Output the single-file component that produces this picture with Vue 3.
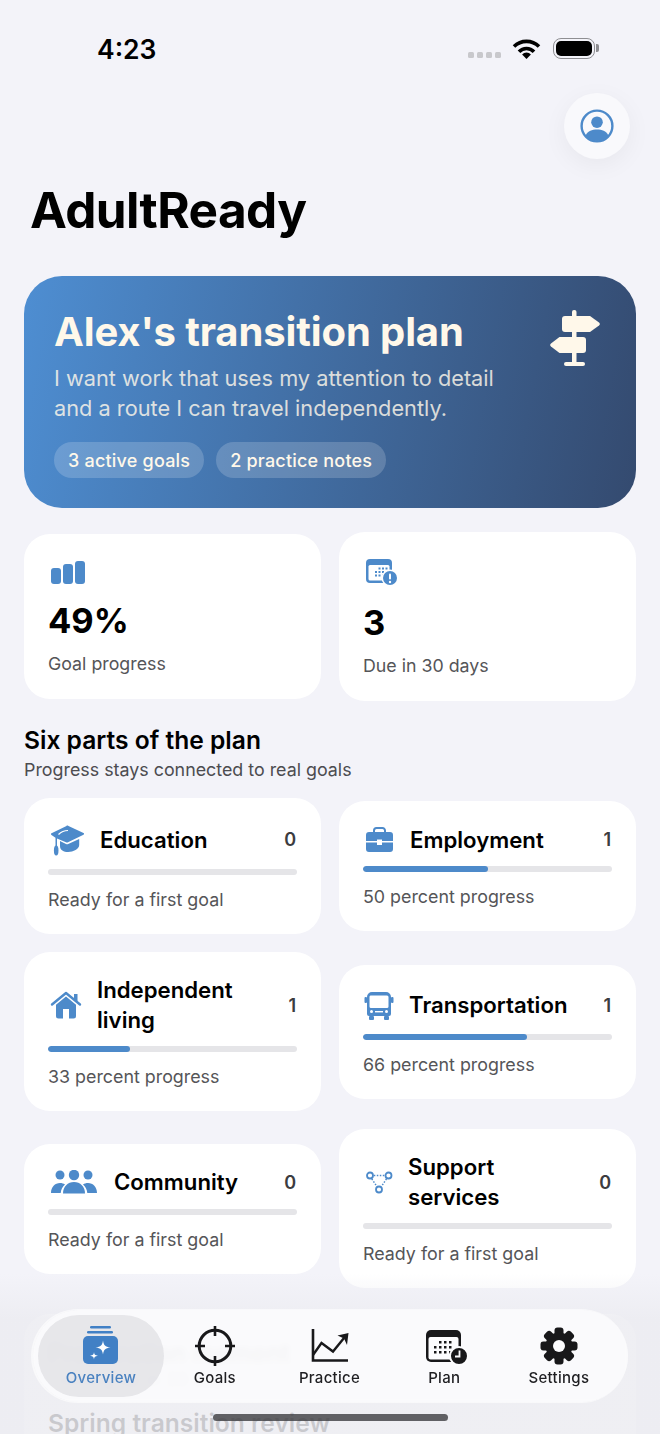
<template>
  <div class="phone">
    <div class="status-bar">
      <span class="time">4:23</span>
      <div class="status-icons">
        <div class="signal"><i></i><i></i><i></i><i></i></div>
        <svg class="wifi" width="29" height="21" viewBox="0 0 29 21">
          <path d="M2 8.5a17.8 17.8 0 0 1 25 0M7 13.8a10.2 10.2 0 0 1 15 0" fill="none" stroke="#000" stroke-width="3.6" />
          <path d="M14.5 21l-4.4-4.6a6 6 0 0 1 8.8 0z" />
        </svg>
        <div class="battery"><div class="battery-level"></div></div>
      </div>
    </div>

    <div class="top-row">
      <button class="avatar">
        <svg width="34" height="34" viewBox="0 0 34 34">
          <circle cx="17" cy="17" r="15.4" fill="none" stroke="#4d8aca" stroke-width="2.4" />
          <circle cx="17" cy="13.2" r="5.8" fill="#4d8aca" />
          <path d="M5.6 26.5C8 22 12 20.6 17 20.6s9 1.4 11.4 5.9A15 15 0 0 1 17 32 15 15 0 0 1 5.6 26.5z" fill="#4d8aca" />
        </svg>
      </button>
    </div>

    <h1 class="app-title">AdultReady</h1>

    <section class="hero">
      <div class="hero-text">
        <h2>Alex's transition plan</h2>
        <p>I want work that uses my attention to detail and a route I can travel independently.</p>
        <div class="chips">
          <span class="chip">3 active goals</span>
          <span class="chip">2 practice notes</span>
        </div>
      </div>
      <svg class="signpost" width="50" height="56" viewBox="0 0 50 56" fill="#fff8ea">
        <rect x="22" y="0" width="4.5" height="54" rx="2" />
        <rect x="14" y="52" width="21" height="4" rx="2" />
        <path d="M15 6h25l9 6.5a2 2 0 0 1 0 3L40 22H15a3 3 0 0 1-3-3V9a3 3 0 0 1 3-3z" />
        <path d="M33 27H9.500L1 33.500a2 2 0 0 0 0 3L9.500 43H33a3 3 0 0 0 3-3V30a3 3 0 0 0-3-3z" />
      </svg>
    </section>

    <div class="stats">
      <div class="stat-card">
        <div class="stat-icon small">
          <svg width="37" height="30" viewBox="0 0 37 30" fill="#4d8aca">
            <rect x="3" y="10" width="10" height="16" rx="3" />
            <rect x="15" y="6" width="10" height="20" rx="3" />
            <rect x="27" y="3" width="10" height="23" rx="3" />
          </svg>
        </div>
        <div class="stat-value">49%</div>
        <div class="stat-label">Goal progress</div>
      </div>
      <div class="stat-card">
        <div class="stat-icon">
          <svg width="37" height="34" viewBox="0 0 37 34">
            <rect x="3" y="3" width="26" height="24" rx="4" fill="#4d8aca" />
            <rect x="5.500" y="9" width="21" height="15.500" rx="1.500" fill="#fff" />
            <g fill="#4d8aca">
              <rect v-for="d in calendarDots" :key="d[0] + '-' + d[1]" :x="d[0]" :y="d[1]" width="2" height="2" />
            </g>
            <circle cx="27" cy="22" r="8.500" fill="#fff" />
            <circle cx="27" cy="22" r="7" fill="#4d8aca" />
            <rect x="26" y="17.500" width="2" height="6" rx="1" fill="#fff" />
            <circle cx="27" cy="26" r="1.200" fill="#fff" />
          </svg>
        </div>
        <div class="stat-value">3</div>
        <div class="stat-label">Due in 30 days</div>
      </div>
    </div>

    <h3 class="section-title">Six parts of the plan</h3>
    <p class="section-sub">Progress stays connected to real goals</p>

    <div class="areas">
      <div v-for="area in areas" :key="area.name" class="area-card">
        <div class="area-head" :style="{ minHeight: area.head + 'px' }">
          <svg v-if="area.icon === 'cap'" width="38" height="32" viewBox="0 0 38 32" fill="#4d8aca">
            <path d="M19 1.500c.5 0 1 .1 1.500.4l15 7a1 1 0 0 1 0 1.800l-15.500 7.500c-.6.300-1.400.3-2 0L9 14.500v7.500H7.500v-8.200L3.500 11a1 1 0 0 1 0-1.800l15-7.300c.2-.2.300-.4.500-.4z" />
            <path d="M12 17l6 3c.7.3 1.500.3 2.200 0l11-5v6c0 4-6 7-11 7-4.500 0-8.200-2-8.200-6z" />
            <path d="M20 6.500c-3.500 0-7 1.500-9.500 4" fill="none" stroke="#fff" stroke-width="1.200" />
            <ellipse cx="8.200" cy="26.500" rx="2.300" ry="5" />
          </svg>
          <svg v-else-if="area.icon === 'case'" width="33" height="25" viewBox="0 0 33 25" fill="#4d8aca">
            <path d="M11 5V3.500A2.500 2.500 0 0 1 13.500 1h6A2.500 2.500 0 0 1 22 3.500V5" fill="none" stroke="#4d8aca" stroke-width="2" />
            <path d="M6 5h21a3 3 0 0 1 3 3v6H19v-1.500h-5V14H3V8a3 3 0 0 1 3-3z" />
            <path d="M3 15.500h11V18h5v-2.500h11V22a3 3 0 0 1-3 3H6a3 3 0 0 1-3-3z" />
          </svg>
          <svg v-else-if="area.icon === 'house'" width="35" height="28" viewBox="0 0 35 28" fill="#4d8aca">
            <path d="M4 13.500L18 2l14 11.500" fill="none" stroke="#4d8aca" stroke-width="2.400" stroke-linecap="round" stroke-linejoin="round" />
            <rect x="26" y="3" width="3.500" height="7" />
            <path d="M18 5.500l10 8.300V25a2.500 2.500 0 0 1-2.500 2.500H10.500A2.500 2.500 0 0 1 8 25V13.800zM15 18v9.500h6V18z" fill-rule="evenodd" />
          </svg>
          <svg v-else-if="area.icon === 'bus'" width="32" height="29" viewBox="0 0 32 29" fill="#4d8aca">
            <path d="M9 1h14a5 5 0 0 1 5 5v17a2 2 0 0 1-2 2H6a2 2 0 0 1-2-2V6a5 5 0 0 1 5-5zm-1.500 3.500a1.500 1.500 0 0 0-1 1.500v9.500a1.500 1.500 0 0 0 1.500 1.500h16a1.500 1.500 0 0 0 1.500-1.500V6a1.500 1.500 0 0 0-1.500-1.500z" fill-rule="evenodd" />
            <rect x="6" y="25" width="5" height="4" rx="1" />
            <rect x="21" y="25" width="5" height="4" rx="1" />
            <rect x="1.500" y="6" width="2.500" height="6" rx="1" />
            <rect x="28" y="6" width="2.500" height="6" rx="1" />
            <circle cx="8.500" cy="20.500" r="1.500" fill="#fff" />
            <circle cx="23.500" cy="20.500" r="1.500" fill="#fff" />
            <rect x="12" y="20" width="8" height="1.400" fill="#fff" />
          </svg>
          <svg v-else-if="area.icon === 'people'" width="52" height="24" viewBox="0 0 52 24" fill="#4d8aca">
            <circle cx="12" cy="5" r="4.500" />
            <circle cx="40" cy="5" r="4.500" />
            <path d="M3 23c0-6 4-10 9-10 2 0 3.500.5 5 1.500-2.500 2-4 5-4.300 8.500zM49 23c0-6-4-10-9-10-2 0-3.500.5-5 1.500 2.500 2 4 5 4.300 8.500z" />
            <circle cx="26" cy="5" r="5.200" />
            <path d="M15 23.500c0-7 4.800-11.500 11-11.500s11 4.500 11 11.500z" />
          </svg>
          <svg v-else width="31" height="23" viewBox="0 0 31 23" fill="none" stroke="#4d8aca">
            <circle cx="7" cy="4.500" r="3" stroke-width="1.800" />
            <circle cx="25.500" cy="4.500" r="3" stroke-width="1.800" />
            <circle cx="16" cy="18.500" r="3" stroke-width="1.800" />
            <path d="M10.800 4.500h11M8.800 7.800l5 7.500M23.500 7.800l-5 7.500" stroke-width="1.500" stroke-dasharray="1.500 1.500" />
          </svg>
          <span class="area-name" :class="{ narrow: area.narrow }">{{ area.name }}</span>
          <span class="area-count">{{ area.count }}</span>
        </div>
        <div class="track"><div class="fill" :style="{ width: area.progress + '%' }"></div></div>
        <div class="area-note">{{ area.progress ? area.progress + ' percent progress' : 'Ready for a first goal' }}</div>
      </div>
    </div>

    <div class="next-card">
      <div class="next-title">Preparation moment</div>
      <div class="next-sub">Coming up in 30 days</div>
      <div class="next-title second">Spring transition review</div>
    </div>

    <div class="fade"></div>

    <nav class="tabbar">
      <div class="tab active">
        <svg width="36" height="40" viewBox="0 0 36 40" fill="#4180c5">
          <rect x="7" y="0" width="21" height="2.400" rx="1.200" />
          <rect x="4" y="5" width="26" height="2.600" rx="1.300" />
          <rect x="0" y="10" width="35" height="28" rx="5" />
          <path d="M20 14.500c.8 5 2 6.200 7.500 7-5.500.8-6.700 2-7.500 7-.8-5-2-6.200-7.500-7 5.500-.8 6.700-2 7.500-7zM11 26c.4 2.700 1 3.300 4 3.800-3 .5-3.600 1.100-4 3.700-.4-2.600-1-3.200-4-3.700 3-.5 3.600-1.100 4-3.800z" fill="#fff" />
        </svg>
        <span>Overview</span>
      </div>
      <div class="tab">
        <svg width="42" height="40" viewBox="0 0 42 40" fill="none" stroke="#18181a" stroke-width="3">
          <circle cx="21" cy="20" r="15.800" />
          <path d="M21 0v10M21 30v10M1 20h10M31 20h10" stroke-width="2.600" />
        </svg>
        <span>Goals</span>
      </div>
      <div class="tab">
        <svg width="38" height="40" viewBox="0 0 38 40" fill="none" stroke="#18181a" stroke-width="2.400">
          <path d="M2 3v31.500h35" stroke-width="2.600" />
          <path d="M2 29l8.500-12 11.500 8.500L33 12" />
          <path d="M37.500 7L36 19l-3-6.500-6.500-3z" fill="#18181a" stroke="none" />
        </svg>
        <span>Practice</span>
      </div>
      <div class="tab">
        <svg width="48" height="40" viewBox="0 0 48 40">
          <rect x="6" y="4" width="35" height="32" rx="5" fill="#18181a" />
          <rect x="8.500" y="11" width="30" height="22.500" rx="2" fill="#fcfcfe" />
          <g fill="#18181a">
            <rect v-for="d in planDots" :key="d[0] + '-' + d[1]" :x="d[0]" :y="d[1]" width="2.500" height="2.500" />
          </g>
          <circle cx="39" cy="30" r="9" fill="#18181a" stroke="#fcfcfe" stroke-width="2" />
          <path d="M39.500 24.500v6H35" fill="none" stroke="#fcfcfe" stroke-width="1.800" />
        </svg>
        <span>Plan</span>
      </div>
      <div class="tab">
        <svg width="40" height="40" viewBox="0 0 40 40" fill="#18181a">
          <rect v-for="a in gearTeeth" :key="a" x="15.500" y="1.500" width="9" height="37" rx="3" :transform="`rotate(${a} 20 20)`" />
          <circle cx="20" cy="20" r="13.500" />
          <circle cx="20" cy="20" r="6" fill="#fcfcfe" />
        </svg>
        <span>Settings</span>
      </div>
    </nav>
    <div class="home-indicator"></div>
  </div>
</template>

<script setup>
const areas = [
  { name: 'Education', icon: 'cap', count: 0, progress: 0, head: 37 },
  { name: 'Employment', icon: 'case', count: 1, progress: 50, head: 31 },
  { name: 'Independent living', icon: 'house', count: 1, progress: 33, head: 60, narrow: true },
  { name: 'Transportation', icon: 'bus', count: 1, progress: 66, head: 35 },
  { name: 'Community', icon: 'people', count: 0, progress: 0, head: 31 },
  { name: 'Support services', icon: 'nodes', count: 0, progress: 0, head: 60, narrow: true }
]

const grid = (xs, ys) => ys.flatMap((y) => xs.map((x) => [x, y]))
const calendarDots = grid([12, 15.5, 19, 22.5], [11.5, 15, 18.5]).filter((d) => !(d[0] === 12 && d[1] === 11.5))
const planDots = grid([14, 19, 24, 29], [15, 20, 25]).filter((d) => !(d[0] === 14 && d[1] === 15))
const gearTeeth = [0, 45, 90, 135]
</script>

<style>
html,
body {
  margin: 0;
  background: #f3f3f9;
}
</style>

<style scoped>
.phone {
  position: relative;
  width: 660px;
  height: 1434px;
  overflow: hidden;
  background: #f3f3f9;
  font-family: Inter, "Liberation Sans", sans-serif;
  color: #000;
}

.status-bar {
  display: flex;
  align-items: center;
  justify-content: space-between;
  height: 36px;
  padding: 30px 65px 0 97px;
}

.time {
  margin-top: 2px;
  font-size: 26.5px;
  font-weight: 600;
  line-height: 36px;
}

.status-icons {
  display: flex;
  align-items: center;
}

.signal {
  display: flex;
  gap: 3px;
  margin: 14px 11px 0 0;
}

.signal i {
  width: 6px;
  height: 6px;
  border-radius: 1.500px;
  background: #c8c8cc;
}

.wifi {
  margin-right: 12px;
}

.battery {
  position: relative;
  box-sizing: border-box;
  width: 42px;
  height: 21px;
  padding: 2px;
  border: 1.500px solid #8e8e92;
  border-radius: 8px;
}

.battery::after {
  content: "";
  position: absolute;
  top: 5px;
  right: -5px;
  width: 3px;
  height: 8px;
  border-radius: 0 2px 2px 0;
  background: #8e8e92;
}

.battery-level {
  height: 100%;
  border-radius: 5px;
  background: #000;
}

.top-row {
  display: flex;
  justify-content: flex-end;
  padding: 27px 30px 0 0;
}

.avatar {
  display: flex;
  align-items: center;
  justify-content: center;
  width: 66px;
  height: 66px;
  padding: 0;
  border: none;
  border-radius: 50%;
  background: #f9f9fc;
  box-shadow: 0 6px 24px rgba(0, 0, 0, 0.05);
}

.app-title {
  margin: 21px 0 36px 30px;
  font-size: 49.5px;
  font-weight: 700;
  line-height: 60px;
  letter-spacing: -0.6px;
}

.hero {
  display: flex;
  justify-content: space-between;
  margin: 0 24px;
  padding: 30px 36px 30px 30px;
  border-radius: 38px;
  background: linear-gradient(100deg, #4e8ed2 0%, #344a6f 100%);
  color: #fff8ea;
}

.hero-text {
  width: 450px;
}

.hero h2 {
  margin: 0;
  font-size: 40px;
  font-weight: 700;
  line-height: 52px;
  letter-spacing: -0.12px;
}

.hero p {
  margin: 5px 0 0;
  font-size: 21.75px;
  line-height: 30px;
  color: rgba(255, 248, 234, 0.82);
}

.chips {
  display: flex;
  gap: 12px;
  margin-top: 19px;
}

.chip {
  padding: 0 14px;
  border-radius: 18px;
  background: rgba(255, 255, 255, 0.18);
  font-size: 18px;
  font-weight: 500;
  line-height: 37px;
  height: 36px;
  letter-spacing: 0.2px;
}

.signpost {
  margin-top: 4px;
}

.stats {
  display: grid;
  grid-template-columns: 297px 297px;
  gap: 18px;
  align-items: center;
  margin: 24px 24px 0;
}

.stat-card {
  padding: 24px 24px 23px;
  border-radius: 26px;
  background: #fff;
}

.stat-icon {
  height: 34px;
}

.stat-icon.small {
  height: 30px;
}

.stat-value {
  margin-top: 13px;
  font-size: 34.5px;
  font-weight: 700;
  line-height: 40px;
}

.stat-label {
  margin-top: 12px;
  font-size: 17.8px;
  line-height: 22px;
  padding-bottom: 1px;
  color: #555558;
}

.section-title {
  margin: 23px 24px 0;
  font-size: 24.6px;
  font-weight: 600;
  line-height: 32px;
}

.section-sub {
  margin: 3px 24px 0;
  font-size: 17.85px;
  line-height: 22px;
  color: #4c4c50;
}

.areas {
  display: grid;
  grid-template-columns: 297px 297px;
  gap: 18px;
  align-items: center;
  margin: 17px 24px 0;
}

.area-card {
  padding: 23px 24px;
  border-radius: 26px;
  background: #fff;
}

.area-head {
  display: flex;
  align-items: center;
  gap: 14px;
  margin-bottom: 11px;
}

.area-name {
  flex: 1;
  font-size: 22.2px;
  font-weight: 600;
  line-height: 30px;
}

.area-name.narrow {
  padding-right: 30px;
}

.area-count {
  padding-right: 1px;
  font-size: 18px;
  font-weight: 600;
  color: #3c3c40;
}

.track {
  height: 6px;
  border-radius: 3px;
  background: #e5e5e8;
  overflow: hidden;
}

.fill {
  height: 100%;
  border-radius: 3px;
  background: #4d8aca;
}

.area-note {
  margin-top: 14px;
  font-size: 17.85px;
  line-height: 22px;
  color: #555558;
}

.next-card {
  margin: 26px 24px 0;
  padding: 24px;
  border-radius: 26px;
  background: #fff;
}

.next-title {
  font-size: 24.6px;
  font-weight: 600;
  line-height: 30px;
}

.next-title.second {
  margin-top: 22px;
  line-height: 20px;
}

.next-sub {
  margin-top: 1px;
  font-size: 18px;
  line-height: 22px;
  color: #555558;
}

.fade {
  position: absolute;
  left: 0;
  right: 0;
  bottom: 0;
  height: 160px;
  background: linear-gradient(to bottom, rgba(236, 236, 241, 0) 0%, rgba(236, 236, 241, 0.85) 28%, rgba(236, 236, 241, 0.85) 100%);
}

.tabbar {
  position: absolute;
  left: 33px;
  top: 1310px;
  box-sizing: border-box;
  display: flex;
  width: 595px;
  height: 92px;
  padding: 5px;
  border-radius: 46px;
  background: rgba(252, 252, 254, 0.82);
  backdrop-filter: blur(3px);
  box-shadow: -1px 0 0 1px rgba(255, 255, 255, 0.6);
}

.tab {
  display: flex;
  flex: 0 0 114.7px;
  flex-direction: column;
  align-items: center;
  justify-content: flex-end;
  gap: 3px;
  padding-bottom: 10px;
  font-size: 15px;
  font-weight: 500;
  line-height: 18px;
  letter-spacing: 0.3px;
  color: #1f1f22;
}

.tab svg {
  flex: none;
}

.tab.active {
  flex-basis: 126px;
  margin-right: -6.5px;
  border-radius: 41px;
  background: rgba(224, 224, 228, 0.78);
  color: #4a82c0;
}

.home-indicator {
  position: absolute;
  left: 213px;
  top: 1414px;
  width: 235px;
  height: 7px;
  border-radius: 4px;
  background: rgba(60, 60, 64, 0.8);
}
</style>
